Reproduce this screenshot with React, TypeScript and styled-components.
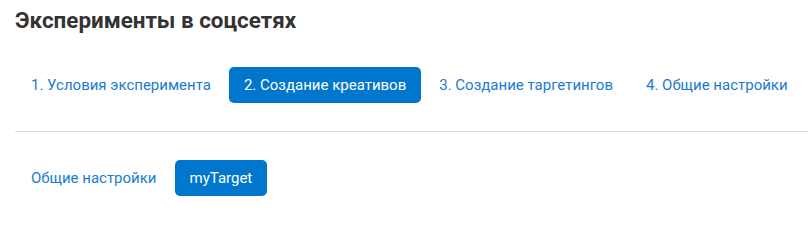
import styled, { createGlobalStyle } from 'styled-components';

const GlobalStyle = createGlobalStyle`
    body {
        margin: 0;
        background: #fff;
        font-family: Roboto, "Liberation Sans", sans-serif;
    }
`;

const Page = styled.div`
    padding: 8px 0 0 15px;
`;

const Title = styled.h1`
    margin: 0;
    font-size: 22.4px;
    line-height: 24px;
    font-weight: 700;
    color: #333;
`;

const TabRow = styled.div<{ $top: number }>`
    display: flex;
    gap: 3px;
    padding-left: 1px;
    margin-top: ${p => p.$top}px;
`;

const Tab = styled.div<{ $active?: boolean }>`
    height: 36px;
    padding: 0 15px;
    display: flex;
    align-items: center;
    border-radius: 5px;
    font-size: 15px;
    white-space: nowrap;
    cursor: pointer;
    color: ${p => (p.$active ? '#fff' : '#1a7bd0')};
    background: ${p => (p.$active ? '#0077cc' : 'transparent')};
`;

const Divider = styled.hr`
    margin: 28px 0 0;
    border: 0;
    border-top: 1px solid #ddd;
`;

const steps = [
    '1. Условия эксперимента',
    '2. Создание креативов',
    '3. Создание таргетингов',
    '4. Общие настройки',
];

const subTabs = ['Общие настройки', 'myTarget'];

export default function App() {
    return <>
        <GlobalStyle />
        <Page>
            <Title>Эксперименты в соцсетях</Title>
            <TabRow $top={35}>
                {steps.map((label, i) => <Tab key={label} $active={i === 1}>{label}</Tab>)}
            </TabRow>
            <Divider />
            <TabRow $top={28}>
                {subTabs.map((label, i) => <Tab key={label} $active={i === 1}>{label}</Tab>)}
            </TabRow>
        </Page>
    </>;
}
